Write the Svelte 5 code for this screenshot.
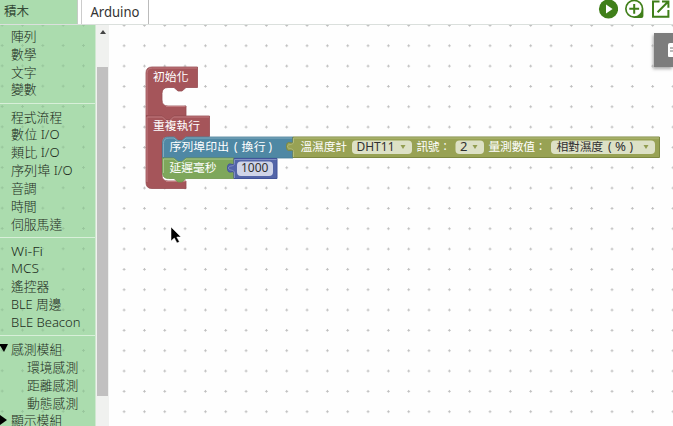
<script>
  const groups = [
    ['陣列', '數學', '文字', '變數'],
    ['程式流程', '數位 I/O', '類比 I/O', '序列埠 I/O', '音調', '時間', '伺服馬達'],
    ['Wi-Fi', 'MCS', '遙控器', 'BLE 周邊', 'BLE Beacon']
  ];
  const widths = {
    'Wi-Fi': 32, 'MCS': 28, 'BLE Beacon': 69.5, 'BLE 周邊': 50.5,
    '數位 I/O': 48.5, '類比 I/O': 48.5, '序列埠 I/O': 61.5
  };
  const sensors = ['環境感測', '距離感測', '動態感測'];
  const labelWidth = (s) => widths[s] ?? s.length * 12.8;
</script>

{#snippet label(s)}
  <svg class="label" width="76" height="18"><text x="0" y="14" textLength={labelWidth(s)} lengthAdjust="spacingAndGlyphs">{s}</text></svg>
{/snippet}

<div class="app">
  <header>
    <div class="tab active">積木</div>
    <div class="tab arduino"><svg width="52" height="22"><text x="-0.5" y="16.5" textLength="49" lengthAdjust="spacingAndGlyphs">Arduino</text></svg></div>
    <div class="tools">
      <svg width="20" height="20" viewBox="0 0 20 20"><circle cx="10.500" cy="10" r="9.600" fill="#407f1a" /><path d="M8 5.600v8.800l6.600-4.400z" fill="#fff" /></svg>
      <svg width="20" height="20" viewBox="0 0 20 20"><path d="M10.200.6a9.200 9.200 0 1 0 0 18.400h7.200q2 0 2-2V9.800A9.200 9.200 0 0 0 10.200.6z" fill="#407f1a" /><circle cx="10.200" cy="9.800" r="7.500" fill="#fff" /><path d="M10.200 4.900v9.800M5.300 9.800h9.800" stroke="#407f1a" stroke-width="2" /></svg>
      <svg width="20" height="20" viewBox="0 0 20 20"><path d="M9.500 2.400H3v15.400h15.400V11M12 2.400h6.400v6.400M18 2.800L7.600 13.200" fill="none" stroke="#407f1a" stroke-width="2" /></svg>
    </div>
  </header>
  <main>
    <nav>
      {#each groups as group}
        <ul>
          {#each group as item}<li>{@render label(item)}</li>{/each}
        </ul>
      {/each}
      <ul>
        <li><i class="arrow open"></i>{@render label('感測模組')}</li>
        {#each sensors as item}<li class="sub">{@render label(item)}</li>{/each}
        <li><i class="arrow"></i>{@render label('顯示模組')}</li>
      </ul>
    </nav>
    <div class="scroll"><span class="up"></span><div class="thumb"></div></div>
    <svg class="workspace" width="564" height="401" viewBox="109 25 564 401">
      <defs>
        <pattern id="grid" x="113.900" y="15.300" width="20.330" height="20.330" patternUnits="userSpaceOnUse">
          <path d="M8.900 10.100h2.600M10.200 8.800v2.600" stroke="#bcbcbc" stroke-width="1" />
        </pattern>
      </defs>
      <rect x="109" y="25" width="564" height="401" fill="#fefefe" />
      <rect x="109" y="25" width="564" height="401" fill="url(#grid)" />

      <!-- setup and loop; the mouths stay open to the white canvas -->
      <path d="M162 180.500V142h24v39h-18z" fill="#fff" />
      <g fill="#a5555a" stroke="#964b50" stroke-width=".8">
        <path d="M146 73q0-6 6-6h45.500v20.500H186l-4 3.500h-4l-4-3.500h-6q-6 0-6 6v6.500q0 6 6 6h18V116h-12l-4 3.500h-4l-4-3.500H146z" />
        <path d="M146 116h16l4 3.500h4l4-3.500h35.500v20.500H186l-4 3.500h-4l-4-3.500h-6q-6 0-6 6v32.500q0 6 6 6h18v7.500h-34q-6 0-6-6z" />
      </g>
      <path d="M147 115V73.500q0-5.500 5.500-5.500H197M147 182v-65h15.500l3.500 3.500h4l3.500-3.500H209M166 106.500h19.500M166 181.500h19.500" fill="none" stroke="#c07a7e" />

      <!-- serial print -->
      <path d="M162.500 143q0-6 6-6h5.500l4 3.500h4l4-3.500H293v21H186l-4 3.500h-4l-4-3.500h-11.500z" fill="#4f88a4" stroke="#457a94" stroke-width=".8" />
      <path d="M163.500 157v-13.500q0-5.500 5.500-5.500h5l4 3.500h4l4-3.500H292" fill="none" stroke="#83acbf" />

      <!-- delay -->
      <path d="M162.500 158H174l4 3.500h4l4-3.500h48v20.500h-48l-4 3.500h-4l-4-3.500h-5.500q-6 0-6-6z" fill="#7ea75b" stroke="#6e954d" stroke-width=".8" />
      <path d="M163.500 173v-14H174l4 3.500h4l4-3.500h47" fill="none" stroke="#a7c58e" />

      <!-- sensor -->
      <path d="M293 137h366.500v20.500H293v-6c0-4-6.500 3-6.500-5s6.500-1 6.500-4.500z" fill="#98a254" stroke="#7c8740" />
      <path d="M293.500 157v-5.500c0-4-6-2-6-5s6-1 6-4.500v-4H659" fill="none" stroke="#b3bc7c" />

      <!-- number -->
      <path d="M234 158.500h43V178.500h-43v-5.500c0-4-6.500 3-6.500-5s6.500-1 6.500-4.500z" fill="#5365a8" stroke="#42549a" />
      <path d="M234.500 178v-5c0-4-6-2-6-5s6-1 6-4.500v-4h42" fill="none" stroke="#8390c3" />

      <rect x="237" y="161.500" width="36" height="14.500" rx="4" fill="#cfd4e8" />
      <g fill="#dde1c6">
        <rect x="352" y="140.500" width="60" height="13.500" rx="4" />
        <rect x="455.500" y="140.500" width="28.500" height="13.500" rx="4" />
        <rect x="551" y="140.500" width="104" height="13.500" rx="4" />
      </g>
      <path d="M400.500 145h5l-2.500 4zM472.500 145h5l-2.500 4zM643.500 145h5l-2.500 4z" fill="#929d50" />
      <g class="white">
        <text x="153" y="80.500" textLength="35.500">初始化</text>
        <text x="153" y="129.500" textLength="47">重複執行</text>
        <text x="169.500" y="150.500" textLength="59.500">序列埠印出</text>
        <text x="234" y="150.500">(</text>
        <text x="241.500" y="150.500" textLength="24">換行</text>
        <text x="268.500" y="150.500">)</text>
        <text x="169.500" y="171.800" textLength="47">延遲毫秒</text>
        <text x="300.500" y="150.500" textLength="46.500">溫濕度計</text>
        <text x="416.500" y="150.500" textLength="23">訊號</text>
        <text x="443.500" y="150">:</text>
        <text x="488.500" y="150.500" textLength="46.500">量測數值</text>
        <text x="539" y="150">:</text>
      </g>
      <g class="dark">
        <text x="356.500" y="151" textLength="38" lengthAdjust="spacingAndGlyphs">DHT11</text>
        <text x="460" y="151">2</text>
        <text x="241" y="172.200" textLength="27.500" lengthAdjust="spacingAndGlyphs">1000</text>
        <text class="han" x="556.500" y="150.500" textLength="46.500">相對濕度</text>
        <text class="han" x="608" y="150.500">(</text>
        <text class="han" x="615" y="150.800" textLength="11" lengthAdjust="spacingAndGlyphs">%</text>
        <text class="han" x="629.500" y="150.500">)</text>
      </g>
      <path d="M171 227v14l3.300-3 2.700 5 2.400-1.200-2.600-4.800h4.200z" fill="#000" stroke="#fff" stroke-width=".5" />
    </svg>
    <aside><svg width="6" height="15"><path d="M6 0H2Q0 0 0 2v11q0 1 1 1h5z" fill="#fff" /><path d="M2 5h4M2 8h4" stroke="#777" /></svg></aside>
  </main>
</div>

<style>
  .app { width: 673px; height: 426px; overflow: hidden; background: #fff; font-family: "Noto Sans", "Noto Sans CJK TC", sans-serif; position: relative; }
  header { height: 24px; display: flex; border-bottom: 1px solid #dbe0dd; box-sizing: content-box; }
  .tab { box-sizing: border-box; height: 24px; line-height: 23px; font-size: 12.500px; color: #354b37; }
  .active { width: 78px; background: #abdcae; padding-left: 4px; border-right: 1px solid #c5cbc5; }
  .arduino { width: 68px; margin-left: 3px; padding-left: 9px; border-left: 1px solid #ccc; border-right: 1px solid #bbb; }
  .arduino svg { overflow: visible; }
  .arduino text { font-size: 14px; fill: #333; }
  svg { display: block; }
  .tools { margin-left: auto; display: flex; gap: 6px; padding-right: 3px; height: 20px; margin-top: -1px; }
  main { height: 401px; display: flex; }
  nav {
    box-sizing: border-box; width: 96px; padding-top: 2px; overflow: hidden; background-color: #abdcae;
    background-image: radial-gradient(circle, #98c69c 0 1px, transparent 1.200px);
    background-size: 20.330px 20.330px; background-position: -8px -10px;
    border-right: 1px solid #cfe8d0;
  }
  ul { list-style: none; margin: 0; padding: 0 0 4.300px; border-bottom: 1px solid #d8efd9; }
  ul + ul { padding-top: 4px; }
  li { height: 17.840px; display: flex; align-items: center; padding-left: 11.300px; position: relative; }
  .sub { padding-left: 27px; }
  .label { overflow: visible; flex: none; }
  .label text { font-size: 12.800px; fill: #1c2b20; font-weight: 300; }
  .arrow { position: absolute; left: 0; top: 4px; border-left: 7px solid #000; border-top: 5px solid transparent; border-bottom: 5px solid transparent; }
  .arrow.open { left: -1px; top: 4px; border-top: 8px solid #000; border-bottom: 0; border-left: 5px solid transparent; border-right: 4px solid transparent; }
  .scroll { width: 13px; background: #f0f1ef; display: flex; flex-direction: column; align-items: center; }
  .up { margin-top: 5px; border-bottom: 4px solid #444; border-left: 3px solid transparent; border-right: 3px solid transparent; }
  .thumb { margin-top: 33px; height: 329px; width: 11px; background: #c1c0c0; }
  .workspace { flex: none; }
  .workspace text { font-size: 11.800px; }
  .workspace .white text { fill: #fff; }
  .workspace .dark text { font-size: 13px; fill: #303030; }
  .workspace .dark .han { font-size: 11.800px; }
  aside { position: absolute; right: 0; top: 33px; width: 5px; height: 24px; padding: 10px 0 0 14px; background: #7d7d7d; box-shadow: -1px 2px 3px #aaa; overflow: hidden; }
</style>
